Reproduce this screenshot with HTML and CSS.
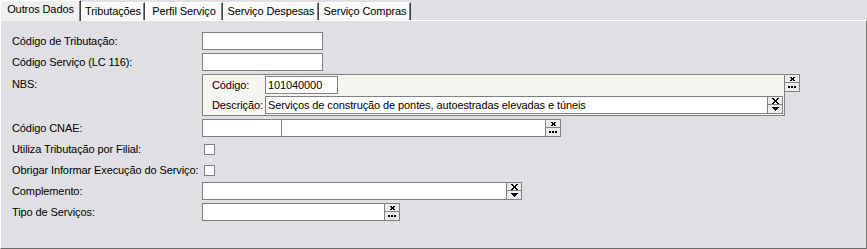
FILE: index.html
```html
<!DOCTYPE html>
<html lang="pt">
<head>
<meta charset="utf-8">
<title>Outros Dados</title>
<link rel="stylesheet" href="styles.css">
</head>
<body>
<div class="tabs">
  <div class="tab active t1">Outros Dados</div>
  <div class="tab t2">Tributações</div>
  <div class="tab t3">Perfil Serviço</div>
  <div class="tab t4">Serviço Despesas</div>
  <div class="tab t5">Serviço Compras</div>
</div>
<div class="panel">
  <div class="form">
    <div class="label">Código de Tributação:</div>
    <div class="field w-short"></div>

    <div class="label">Código Serviço (LC 116):</div>
    <div class="field w-short"></div>

    <div class="label label-top">NBS:</div>
    <div class="nbs">
      <div class="nbs-box">
        <div class="nbs-label">Código:</div>
        <div class="field w-code">101040000</div>
        <div class="nbs-label">Descrição:</div>
        <div class="combo">
          <div class="field grow">Serviços de construção de pontes, autoestradas elevadas e túneis</div>
          <div class="btns">
            <div class="btn"><svg width="7" height="6" viewBox="0 0 7 6" shape-rendering="crispEdges"><path d="M0 0h2v1H0zM5 0h2v1H5zM1 1h2v1H1zM4 1h2v1H4zM2 2h3v2H2zM1 4h2v1H1zM4 4h2v1H4zM0 5h2v1H0zM5 5h2v1H5z"/></svg></div>
            <div class="btn"><svg width="7" height="4" viewBox="0 0 7 4" shape-rendering="crispEdges"><path d="M0 0h7v1H0zM1 1h5v1H1zM2 2h3v1H2zM3 3h1v1H3z"/></svg></div>
          </div>
        </div>
      </div>
      <div class="btns">
        <div class="btn"><svg width="5" height="4" viewBox="0 0 5 4" shape-rendering="crispEdges"><path d="M0 0h2v1H0zM3 0h2v1H3zM1 1h3v2H1zM0 3h2v1H0zM3 3h2v1H3z"/></svg></div>
        <div class="btn"><svg width="8" height="2" viewBox="0 0 8 2" shape-rendering="crispEdges"><path d="M0 0h2v2H0zM3 0h2v2H3zM6 0h2v2H6z"/></svg></div>
      </div>
    </div>

    <div class="label">Código CNAE:</div>
    <div class="combo">
      <div class="cnae">
        <div class="cnae-code"></div>
        <div class="cnae-desc"></div>
      </div>
      <div class="btns">
        <div class="btn"><svg width="5" height="4" viewBox="0 0 5 4" shape-rendering="crispEdges"><path d="M0 0h2v1H0zM3 0h2v1H3zM1 1h3v2H1zM0 3h2v1H0zM3 3h2v1H3z"/></svg></div>
        <div class="btn"><svg width="8" height="2" viewBox="0 0 8 2" shape-rendering="crispEdges"><path d="M0 0h2v2H0zM3 0h2v2H3zM6 0h2v2H6z"/></svg></div>
      </div>
    </div>

    <div class="label">Utiliza Tributação por Filial:</div>
    <div class="checkrow"><span class="check"></span></div>

    <div class="label">Obrigar Informar Execução do Serviço:</div>
    <div class="checkrow"><span class="check"></span></div>

    <div class="label">Complemento:</div>
    <div class="combo">
      <div class="field w-compl"></div>
      <div class="btns">
        <div class="btn"><svg width="7" height="6" viewBox="0 0 7 6" shape-rendering="crispEdges"><path d="M0 0h2v1H0zM5 0h2v1H5zM1 1h2v1H1zM4 1h2v1H4zM2 2h3v2H2zM1 4h2v1H1zM4 4h2v1H4zM0 5h2v1H0zM5 5h2v1H5z"/></svg></div>
        <div class="btn"><svg width="7" height="4" viewBox="0 0 7 4" shape-rendering="crispEdges"><path d="M0 0h7v1H0zM1 1h5v1H1zM2 2h3v1H2zM3 3h1v1H3z"/></svg></div>
      </div>
    </div>

    <div class="label">Tipo de Serviços:</div>
    <div class="combo">
      <div class="field w-tipo"></div>
      <div class="btns">
        <div class="btn"><svg width="5" height="4" viewBox="0 0 5 4" shape-rendering="crispEdges"><path d="M0 0h2v1H0zM3 0h2v1H3zM1 1h3v2H1zM0 3h2v1H0zM3 3h2v1H3z"/></svg></div>
        <div class="btn"><svg width="8" height="2" viewBox="0 0 8 2" shape-rendering="crispEdges"><path d="M0 0h2v2H0zM3 0h2v2H3zM6 0h2v2H6z"/></svg></div>
      </div>
    </div>
  </div>
</div>
</body>
</html>
```
FILE: styles.css
```css
* { box-sizing: border-box; }
html, body { margin: 0; padding: 0; }
body {
  width: 867px;
  height: 249px;
  overflow: hidden;
  background: #e0dfe3;
  color: #000;
  font: 11px "Liberation Sans", Arial, sans-serif;
  letter-spacing: -0.1px;
}

/* tabs */
.tabs {
  display: flex;
  align-items: flex-end;
  height: 20px;
  position: relative;
  z-index: 1;
}
.tab {
  height: 18px;
  line-height: 16px;
  text-align: center;
  white-space: nowrap;
  background: #f9f9f9;
  border-top: 1px solid #fff;
  border-left: 1px solid #fff;
  border-right: 1px solid #404040;
  box-shadow: inset -1px 0 0 #808080;
}
.tab.active {
  height: 21px;
  margin-bottom: -1px;
  background: #f0f0f0;
  padding-bottom: 4px;
}
.t1 { width: 81px; }
.t2 { width: 64px; }
.t3 { width: 78px; }
.t4 { width: 96px; }
.t5 { width: 92px; }

/* panel */
.panel {
  height: 229px;
  border: 1px solid;
  border-color: #fff #808080 #6a6a6a #fff;
}
.form {
  display: grid;
  grid-template-columns: 190px auto;
  row-gap: 3px;
  padding: 11px 0 0 11px;
  justify-items: start;
}
.label {
  line-height: 18px;
  white-space: nowrap;
}
.label-top { padding-top: 1px; }

.field {
  height: 18px;
  border: 1px solid #808080;
  background: #fff;
  padding: 0 2px;
  line-height: 16px;
  white-space: nowrap;
  overflow: hidden;
}
.w-short { width: 121px; }
.w-code { width: 73px; }
.w-compl { width: 305px; }
.w-tipo { width: 183px; }
.grow { flex: 1; }

/* button stacks */
.combo { display: flex; height: 18px; }
.btns {
  width: 16px;
  height: 18px;
  flex: none;
  display: flex;
  flex-direction: column;
  margin-left: -1px;
}
.btn {
  height: 9px;
  border: 1px solid #808080;
  background: #ededed;
  display: flex;
  align-items: center;
  justify-content: center;
}
.btn + .btn { border-top: none; }
.btn svg { display: block; fill: #000; }

/* NBS group */
.nbs { display: flex; align-items: flex-start; }
.nbs-box {
  width: 583px;
  height: 42px;
  border: 1px solid #808080;
  background: #f6f5f0;
  padding: 1px 1px 0 9px;
  display: grid;
  grid-template-columns: 53px 1fr;
  grid-template-rows: 18px 18px;
  row-gap: 2px;
  justify-items: start;
}
.nbs-box .combo { width: 100%; }
.nbs-label { line-height: 18px; white-space: nowrap; }

/* CNAE */
.cnae {
  width: 344px;
  height: 18px;
  display: flex;
  border: 1px solid #808080;
  background: #fff;
}
.cnae-code { width: 79px; border-right: 1px solid #808080; }
.cnae-desc { flex: 1; }

/* checkboxes */
.checkrow { height: 18px; padding: 4px 0 0 2px; }
.check {
  display: block;
  width: 11px;
  height: 11px;
  border: 1px solid #808080;
  background: #fff;
}
```
